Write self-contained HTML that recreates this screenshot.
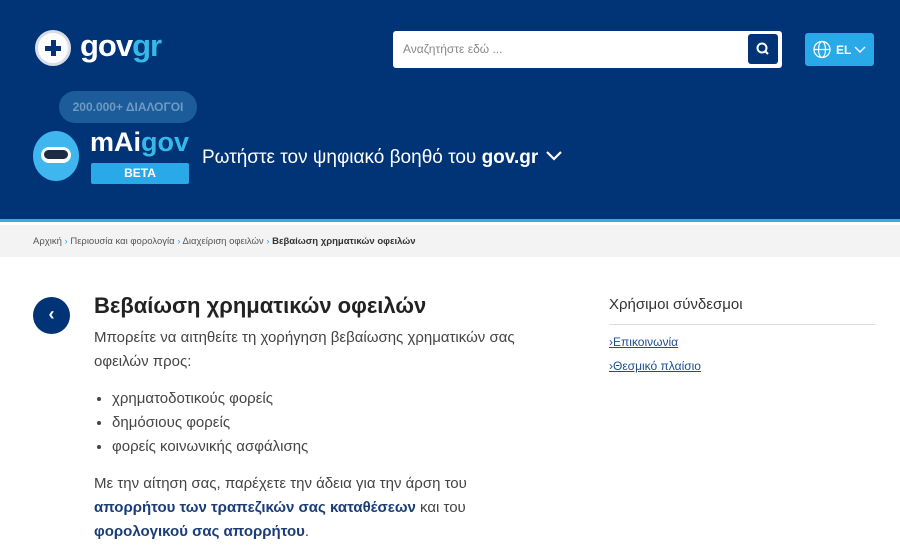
<!DOCTYPE html>
<html><head><meta charset="utf-8"><style>
*{margin:0;padding:0;box-sizing:border-box}
body{width:900px;height:553px;overflow:hidden;background:#fff;font-family:"Liberation Sans","DejaVu Sans",sans-serif;color:#333}
.hdr{position:absolute;left:0;top:0;width:900px;height:222px;background:#003476;border-bottom:3px solid #3ea6e0}
.logo{position:absolute;left:80px;top:28px;font-size:31px;font-weight:bold;color:#fff;letter-spacing:-1px}
.logo span{color:#36b9e8}
.emb{position:absolute;left:35px;top:30px;width:36px;height:36px;border-radius:50%;border:3px solid #d8dde8;background:#fff}
.emb:before{content:"";position:absolute;left:7px;top:13px;width:16px;height:5px;background:#003476}
.emb:after{content:"";position:absolute;left:13px;top:7px;width:5px;height:16px;background:#003476}
.search{position:absolute;left:393px;top:31px;width:389px;height:37px;background:#fff;border-radius:3px}
.search span{position:absolute;left:10px;top:11px;font-size:12px;color:#888}
.sbtn{position:absolute;right:4px;top:3px;width:30px;height:30px;background:#003476;border-radius:3px}
.lang{position:absolute;left:805px;top:33px;width:69px;height:33px;background:#2aa9e8;border-radius:3px;color:#fff;font-weight:bold;font-size:12px}
.bubble{position:absolute;left:59px;top:91px;width:138px;height:32px;background:#1c5c9a;border-radius:16px;color:#6f9ac2;font-size:12px;font-weight:bold;text-align:center;line-height:32px}
.robot{position:absolute;left:33px;top:131px;width:46px;height:50px;border-radius:50%;background:#3fb6ee}
.mai{position:absolute;left:90px;top:127px;color:#fff;font-size:27px;font-weight:bold}
.mai span{color:#36b9e8}
.beta{position:absolute;left:91px;top:163px;width:98px;height:21px;background:#2aa9e8;color:#fff;font-size:12px;font-weight:bold;text-align:center;line-height:21px;border-radius:2px}
.ask{position:absolute;left:202px;top:147px;color:#fff;font-size:19px}
.bc{position:absolute;left:0;top:225px;width:900px;height:32px;background:#f3f3f3;font-size:9.5px;color:#555;padding:11px 0 0 33px}
.bc i{color:#2aa9e8;font-style:normal}
.back{position:absolute;left:33px;top:297px;width:37px;height:37px;border-radius:50%;background:#003476;color:#fff;text-align:center;font-size:18px;font-weight:bold;line-height:35px}
h1{position:absolute;left:94px;top:293px;font-size:22px;color:#222}
.txt{position:absolute;left:94px;top:326px;width:440px;font-size:15px;line-height:24px;color:#444}
.txt ul{margin:13px 0 13px 18px}
.txt b{color:#1a3d7a}
.side{position:absolute;left:609px;top:296px;width:266px}
.side h3{font-weight:normal;font-size:15px;color:#333;padding-bottom:11px;border-bottom:1px solid #ddd}
.side a{display:block;font-size:12px;color:#1a4f95;text-decoration:underline;margin-top:10px}
</style></head><body>
<div class="hdr">
<div class="emb"></div>
<div class="logo">gov<span>gr</span></div>
<div class="search"><span>Αναζητήστε εδώ ...</span><div class="sbtn"><svg width="30" height="30"><circle cx="14" cy="14" r="4.5" stroke="#fff" stroke-width="2" fill="none"/><line x1="17" y1="17" x2="20" y2="20" stroke="#fff" stroke-width="2"/></svg></div></div>
<div class="lang"><svg width="69" height="33" style="position:absolute;left:0;top:0"><circle cx="17" cy="16.5" r="8" stroke="#fff" stroke-width="1.3" fill="none"/><ellipse cx="17" cy="16.5" rx="3.5" ry="8" stroke="#fff" stroke-width="1.2" fill="none"/><line x1="9" y1="16.5" x2="25" y2="16.5" stroke="#fff" stroke-width="1.2"/><path d="M50 14l5 5 5-5" stroke="#fff" stroke-width="1.4" fill="none"/></svg><span style="position:absolute;left:31px;top:10px">EL</span></div>
<div class="bubble">200.000+ ΔΙΑΛΟΓΟΙ</div>
<div class="robot"><div style="position:absolute;left:8px;top:16px;width:30px;height:16px;border-radius:8px;background:#fff"></div><div style="position:absolute;left:11px;top:19px;width:24px;height:9px;border-radius:5px;background:#1d2c44"></div></div>
<div class="mai">mAi<span>gov</span></div>
<div class="beta">BETA</div>
<div class="ask">Ρωτήστε τον ψηφιακό βοηθό του <b>gov.gr</b> <svg width="20" height="14"><path d="M3 3l7 7 7-7" stroke="#fff" stroke-width="2.2" fill="none"/></svg></div>
</div>
<div class="bc">Αρχική <i>›</i> Περιουσία και φορολογία <i>›</i> Διαχείριση οφειλών <i>›</i> <b style="color:#333">Βεβαίωση χρηματικών οφειλών</b></div>
<div class="back">‹</div>
<h1>Βεβαίωση χρηματικών οφειλών</h1>
<div class="txt">Μπορείτε να αιτηθείτε τη χορήγηση βεβαίωσης χρηματικών σας οφειλών προς:
<ul><li>χρηματοδοτικούς φορείς</li><li>δημόσιους φορείς</li><li>φορείς κοινωνικής ασφάλισης</li></ul>
Με την αίτηση σας, παρέχετε την άδεια για την άρση του <b>απορρήτου των τραπεζικών σας καταθέσεων</b> και του <b>φορολογικού σας απορρήτου</b>.</div>
<div class="side"><h3>Χρήσιμοι σύνδεσμοι</h3><a>›Επικοινωνία</a><a>›Θεσμικό πλαίσιο</a></div>
</body></html>
